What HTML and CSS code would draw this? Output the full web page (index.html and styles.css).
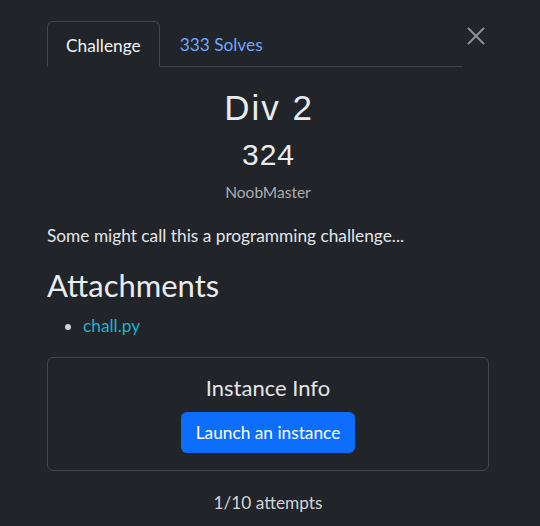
FILE: index.html
```html
<!DOCTYPE html>
<html>
<head>
<meta charset="utf-8">
<link rel="stylesheet" href="styles.css">
</head>
<body>
<div class="modal">
  <div class="header">
    <nav class="tabs">
      <div class="tab active">Challenge</div>
      <div class="tab link">333 Solves</div>
    </nav>
    <button class="close" aria-label="Close">
      <svg width="18" height="18" viewBox="0 0 18 18"><path d="M1 1 L17 17 M17 1 L1 17" stroke="#8e9296" stroke-width="2" fill="none"/></svg>
    </button>
  </div>
  <div class="body">
    <h2 class="name">Div 2</h2>
    <h3 class="value">324</h3>
    <div class="tags">NoobMaster</div>
    <p class="desc">Some might call this a programming challenge...</p>
    <h3 class="att">Attachments</h3>
    <ul class="files"><li><a href="#">chall.py</a></li></ul>
    <div class="instance">
      <div class="inst-title">Instance Info</div>
      <button class="btn">Launch an instance</button>
    </div>
    <div class="attempts">1/10 attempts</div>
  </div>
</div>
</body>
</html>
```
FILE: styles.css
```css
html, body {
  margin: 0;
  padding: 0;
  background: #212429;
  width: 540px;
  height: 526px;
  overflow: hidden;
}
body {
  font-family: Lato, "Noto Sans", sans-serif;
  color: #dee2e6;
  font-size: 17.3px;
  line-height: 1.2;
}
.modal {
  padding: 21px 51px 0 47px;
}
.header {
  display: flex;
  align-items: flex-start;
}
.tabs {
  display: flex;
  width: 415px;
  border-bottom: 1px solid #41464c;
  height: 45px;
}
.tab {
  padding: 0 18px;
  height: 46px;
  line-height: 47px;
  box-sizing: border-box;
}
.tab.active {
  border: 1px solid #41464c;
  border-bottom-color: #212429;
  border-radius: 6px 6px 0 0;
  color: #f1f3f5;
  padding: 0 18px;
}
.tab.link {
  color: #6ea8fe;
  padding-left: 20px;
}
.close {
  background: none;
  border: 0;
  padding: 0;
  margin: 6px 0 0 5px;
  width: 18px;
  height: 18px;
  display: block;
}
.close svg { display: block; }
.body {
  text-align: center;
}
.name {
  font-family: "Liberation Sans", Arial, sans-serif;
  font-weight: 400;
  font-size: 35px;
  letter-spacing: 2px;
  line-height: 35px;
  margin: 23px 0 0;
  padding-left: 2px;
  color: #e9ecef;
}
.value {
  font-family: "Liberation Sans", Arial, sans-serif;
  font-weight: 400;
  font-size: 30px;
  letter-spacing: 1px;
  line-height: 30px;
  margin: 15px 0 0;
  padding-left: 1px;
  color: #e9ecef;
}
.tags {
  font-size: 15.5px;
  color: #a9aeb3;
  margin-top: 13px;
}
.desc {
  text-align: left;
  margin: 24px 0 0;
  color: #e3e6e9;
}
.att {
  text-align: left;
  font-weight: 400;
  font-size: 31px;
  margin: 21px 0 0;
  line-height: 1.2;
  color: #e9ecef;
}
.files {
  text-align: left;
  margin: 11px 0 0;
  padding-left: 36px;
}
.files li::marker { color: #d0d4d8; }
.files a {
  color: #1cb3cb;
  text-decoration: none;
}
.instance {
  margin-top: 21px;
  border: 1px solid #41464c;
  border-radius: 6px;
  height: 114px;
  box-sizing: border-box;
  padding-top: 17px;
  display: flex;
  flex-direction: column;
  align-items: center;
}
.inst-title {
  font-size: 22px;
  line-height: 1.2;
  color: #e3e6e9;
}
.btn {
  margin-top: 10px;
  background: #0d6efd;
  color: #fff;
  border: 0;
  border-radius: 6px;
  font-family: Lato, sans-serif;
  font-size: 17.3px;
  height: 41px;
  padding: 0 15px;
}
.attempts {
  margin-top: 22px;
  color: #d0d4d8;
}
```
